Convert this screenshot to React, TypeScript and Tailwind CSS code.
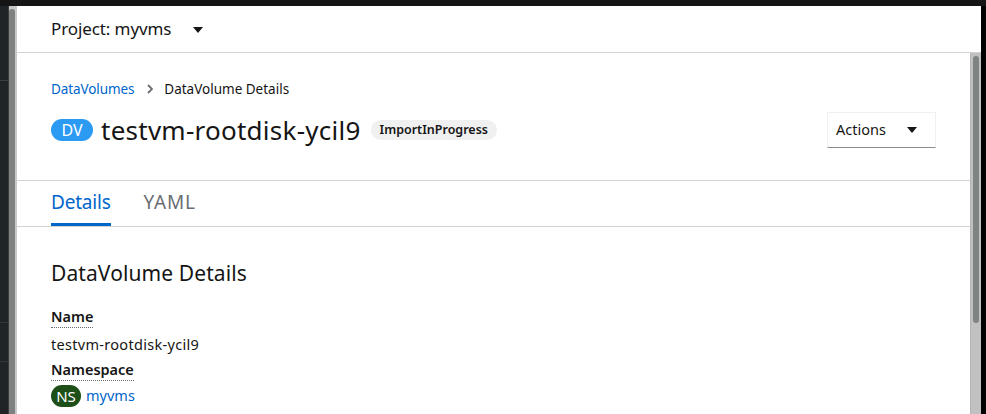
import React from "react";

const Caret = ({ className = "" }: { className?: string }) => (
  <svg className={className} width="10" height="6" viewBox="0 0 10 6">
    <path d="M0 0 L10 0 L5 6 Z" fill="#151515" />
  </svg>
);

export default function App() {
  return (
    <div
      className="w-[986px] h-[414px] bg-black flex flex-col overflow-hidden"
      style={{ fontFamily: '"Noto Sans", "Liberation Sans", sans-serif' }}
    >
      <div className="h-[6px] bg-[#151515]" />
      <div className="flex flex-1 min-h-0">
        {/* dark sidebar remnant */}
        <div className="w-[8px] bg-[#212427] flex flex-col">
          <div className="h-[74px]" />
          <div className="h-px bg-[#3c3f42]" />
          <div className="h-[241px]" />
          <div className="h-px bg-[#34373a]" />
          <div className="h-[38px]" />
          <div className="h-px bg-[#34373a]" />
        </div>
        {/* left scrollbar */}
        <div className="w-[9px] flex bg-[#c6c6c6]">
          <div className="w-px bg-[#3a3d40]" />
          <div className="w-[6px] bg-[#7f8181] mt-[3px] rounded-t-[3px]" />
          <div className="w-[2px] bg-[#c8c8c8]" />
        </div>
        {/* main */}
        <div className="w-[964px] bg-white flex flex-col">
          <div className="h-[47px] border-b border-[#d2d2d2] flex items-center pl-[34px] shrink-0">
            <span className="text-[17px] text-[#151515] tracking-[-0.1px]">Project: myvms</span>
            <Caret className="ml-[22px] mt-[1px]" />
          </div>
          <div className="flex flex-1 min-h-0">
            <div className="w-[953px] flex flex-col">
              <div className="border-b border-[#d2d2d2] h-[128px] pt-[27px] px-[34px] shrink-0">
                <div className="flex items-center h-[18px] text-[13.5px]">
                  <span className="text-[#0066cc] tracking-[-0.1px]">DataVolumes</span>
                  <svg className="ml-[13px] mr-[11px]" width="6" height="10" viewBox="0 0 6 10">
                    <path d="M1 1 L5 5 L1 9" stroke="#6a6e73" strokeWidth="1.8" fill="none" />
                  </svg>
                  <span className="text-[#151515]">DataVolume Details</span>
                </div>
                <div className="flex items-center justify-between mt-[14px] h-[36px]">
                  <div className="flex items-center">
                    <span className="bg-[#2b9af3] text-white rounded-full h-[22px] w-[42px] flex items-center justify-center text-[16px] leading-none">
                      DV
                    </span>
                    <span className="ml-[8px] text-[26px] leading-none text-[#151515] tracking-[0.25px]">
                      testvm-rootdisk-ycil9
                    </span>
                    <span className="ml-[10px] bg-[#f0f0f0] rounded-full h-[20px] px-[9px] flex items-center text-[12.5px] font-semibold text-[#151515]">
                      ImportInProgress
                    </span>
                  </div>
                  <div className="w-[109px] h-[36px] border border-[#f0f0f0] border-b-[#8a8d90] flex items-center justify-between pl-[8px] pr-[18px]">
                    <span className="text-[14.5px] text-[#151515]">Actions</span>
                    <Caret />
                  </div>
                </div>
              </div>
              <div className="h-[46px] border-b border-[#d2d2d2] flex px-[34px] shrink-0">
                <div className="flex flex-col justify-between">
                  <span className="text-[19px] text-[#0066cc] pt-[9px] leading-[24px] tracking-[-0.2px]">Details</span>
                  <div className="h-[3px] bg-[#0066cc]" />
                </div>
                <div className="ml-[33px]">
                  <span className="text-[19px] text-[#6a6e73] pt-[9px] block leading-[24px] tracking-[0.8px]">YAML</span>
                </div>
              </div>
              <div className="px-[34px] pt-[32px]">
                <div className="text-[21px] leading-[28px] text-[#151515] tracking-[0.1px]">DataVolume Details</div>
                <div className="mt-[17px]">
                  <span className="text-[14.5px] font-semibold text-[#151515] leading-[20px] border-b border-dotted border-[#6a6e73] inline-block pb-[1px]">
                    Name
                  </span>
                </div>
                <div className="text-[14.5px] text-[#151515] leading-[20px] mt-[6px] tracking-[0.3px]">testvm-rootdisk-ycil9</div>
                <div className="mt-[3px]">
                  <span className="text-[14.5px] font-semibold text-[#151515] leading-[20px] border-b border-dotted border-[#6a6e73] inline-block pb-[1px]">
                    Namespace
                  </span>
                </div>
                <div className="flex items-center mt-[4px]">
                  <span className="bg-[#1e4f18] text-white rounded-full h-[22px] w-[30px] flex items-center justify-center text-[15px] leading-none">
                    NS
                  </span>
                  <span className="ml-[5px] text-[14.5px] text-[#0066cc]">myvms</span>
                </div>
              </div>
            </div>
            {/* right scrollbar */}
            <div className="w-[11px] bg-[#c1c1c1] border-l border-[#b4b4b4] pt-[3px] flex justify-center">
              <div className="w-[6px] h-[267px] bg-[#7f8383] rounded-[3px]" />
            </div>
          </div>
        </div>
        <div className="flex-1 bg-black" />
      </div>
    </div>
  );
}
